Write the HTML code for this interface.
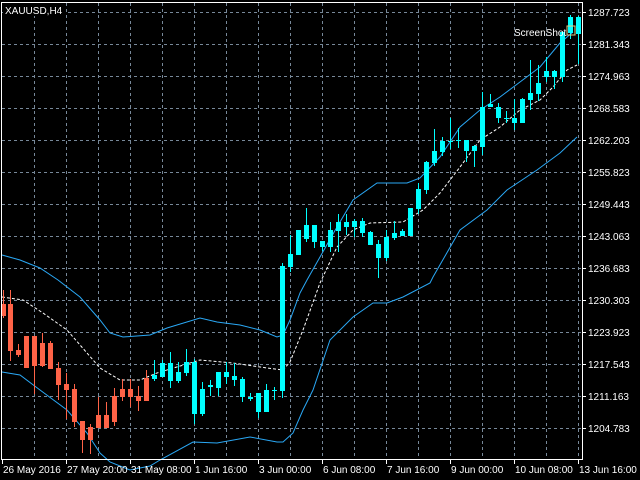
<!DOCTYPE html>
<html><head><meta charset="utf-8"><style>
html,body{margin:0;padding:0;background:#000;width:640px;height:480px;overflow:hidden}
svg{display:block}
text{font-family:"Liberation Sans",sans-serif;font-size:10px;fill:#fff}
</style></head><body>
<svg width="640" height="480" viewBox="0 0 640 480" xmlns="http://www.w3.org/2000/svg">
<rect width="640" height="480" fill="#000"/>
<g stroke="#778899" stroke-width="1" stroke-dasharray="3,3" fill="none">
<path d="M2 12.5H582M2 44.5H582M2 76.5H582M2 108.5H582M2 140.5H582M2 172.5H582M2 204.5H582M2 236.5H582M2 268.5H582M2 300.5H582M2 332.5H582M2 364.5H582M2 396.5H582M2 428.5H582"/>
<path d="M34.5 3V459M66.5 3V459M98.5 3V459M130.5 3V459M162.5 3V459M194.5 3V459M226.5 3V459M258.5 3V459M290.5 3V459M322.5 3V459M354.5 3V459M386.5 3V459M418.5 3V459M450.5 3V459M482.5 3V459M514.5 3V459M546.5 3V459M578.5 3V459"/>
</g>
<g fill="none" stroke="#2aa8f5" stroke-width="1">
<polyline points="2,255 20,260 40,268 58,280 80,297 100,320 110,333 123,337 150,335 167,328 200,318 217,322 240,325 260,330 277,337 283,335 290,320 300,293 307,280 320,257 337,227 353,200 377,183 407,183 420,178 440,157 460,127 480,110 500,97 520,82 540,67 560,43 573,32"/>
<polyline points="2,372 20,375 40,390 67,410 87,433 100,453 110,462 130,470 150,466 160,460 193,442 217,443 250,437 277,442 283,442 293,433 303,410 313,390 330,340 353,317 373,303 387,303 403,297 430,283 433,277 460,230 487,210 507,190 537,170 560,153 577,137"/>
</g>
<polyline fill="none" stroke="#fff" stroke-width="1" stroke-dasharray="3,2" points="2,297 23,300 43,313 67,330 87,353 100,368 120,380 140,380 157,373 200,360 233,363 267,368 283,370 290,362 303,330 320,283 337,247 353,230 370,223 403,222 423,210 440,193 460,167 480,140 500,127 520,110 540,100 553,87 567,70 577,65"/>
<path fill="none" stroke="#ff6347" stroke-width="1" d="M3.5 290V318M10.5 290V361M18.5 344V357M34.5 336V394M42.5 333V367M50.5 341V369M58.5 362V400M66.5 373V419M74.5 384V427M82.5 421V453M90.5 424V454M98.5 397V428M106.5 402V428M114.5 388V426M122.5 379V401M130.5 379V407M138.5 386V411M146.5 370V401"/>
<g fill="#ff6347">
<rect x="1" y="304" width="5" height="12"/><rect x="8" y="304" width="5" height="47"/><rect x="16" y="350" width="5" height="5"/><rect x="24" y="336" width="5" height="32"/><rect x="32" y="336" width="5" height="30"/><rect x="40" y="343" width="5" height="23"/><rect x="48" y="343" width="5" height="26"/><rect x="56" y="368" width="5" height="17"/><rect x="64" y="384" width="5" height="6"/><rect x="72" y="389" width="5" height="33"/><rect x="80" y="421" width="5" height="19"/><rect x="88" y="427" width="5" height="13"/><rect x="96" y="415" width="5" height="13"/><rect x="104" y="415" width="5" height="13"/><rect x="112" y="396" width="5" height="26"/><rect x="120" y="389" width="5" height="8"/><rect x="128" y="389" width="5" height="8"/><rect x="136" y="396" width="5" height="5"/><rect x="144" y="378" width="5" height="23"/>
</g>
<path fill="none" stroke="#00ffff" stroke-width="1" d="M154.5 360V381M162.5 360V377M170.5 352V388M178.5 362V383M186.5 349V376M194.5 359V424M202.5 382V416M210.5 380V396M218.5 372V396M226.5 362V384M234.5 363V386M242.5 377V402M250.5 393V401M258.5 393V418M266.5 384V412M274.5 387V400M282.5 263V398M290.5 235V272M298.5 230V255M306.5 208V242M314.5 225V248M322.5 241V251M330.5 222V252M338.5 214V252M346.5 214V235M354.5 219V237M362.5 218V237M370.5 231V245M378.5 240V278M386.5 230V261M394.5 221V240M402.5 229V236M410.5 208V236M418.5 183V214M426.5 161V194M434.5 129V166M442.5 137V156M450.5 118V149M458.5 128V148M466.5 140V162M474.5 145V167M482.5 92V155M490.5 94V107M498.5 103V123M506.5 111V123M514.5 99V130M522.5 98V123M530.5 60V110M538.5 65V101M546.5 57V82M554.5 70V89M562.5 31V82M570.5 15V39M578.5 16V64"/>
<g fill="#00ffff">
<rect x="152" y="375" width="5" height="4"/><rect x="160" y="363" width="5" height="14"/><rect x="168" y="363" width="5" height="18"/><rect x="176" y="372" width="5" height="9"/><rect x="184" y="362" width="5" height="11"/><rect x="192" y="362" width="5" height="52"/><rect x="200" y="389" width="5" height="25"/><rect x="208" y="385" width="5" height="2"/><rect x="216" y="372" width="5" height="16"/><rect x="224" y="372" width="5" height="5"/><rect x="232" y="376" width="5" height="4"/><rect x="240" y="379" width="5" height="18"/><rect x="248" y="397" width="5" height="2"/><rect x="256" y="393" width="5" height="19"/><rect x="264" y="390" width="5" height="22"/><rect x="272" y="390" width="5" height="1"/><rect x="280" y="266" width="5" height="125"/><rect x="288" y="254" width="5" height="13"/><rect x="296" y="230" width="5" height="25"/><rect x="304" y="225" width="5" height="14"/><rect x="312" y="225" width="5" height="17"/><rect x="320" y="241" width="5" height="6"/><rect x="328" y="230" width="5" height="17"/><rect x="336" y="222" width="5" height="9"/><rect x="344" y="222" width="5" height="5"/><rect x="352" y="221" width="5" height="6"/><rect x="360" y="221" width="5" height="12"/><rect x="368" y="232" width="5" height="13"/><rect x="376" y="244" width="5" height="14"/><rect x="384" y="237" width="5" height="21"/><rect x="392" y="233" width="5" height="5"/><rect x="400" y="231" width="5" height="5"/><rect x="408" y="208" width="5" height="28"/><rect x="416" y="189" width="5" height="20"/><rect x="424" y="162" width="5" height="28"/><rect x="432" y="151" width="5" height="12"/><rect x="440" y="141" width="5" height="11"/><rect x="448" y="141" width="5" height="1"/><rect x="456" y="140" width="5" height="1"/><rect x="464" y="140" width="5" height="11"/><rect x="472" y="146" width="5" height="5"/><rect x="480" y="107" width="5" height="40"/><rect x="488" y="104" width="5" height="3"/><rect x="496" y="107" width="5" height="11"/><rect x="504" y="118" width="5" height="1"/><rect x="512" y="118" width="5" height="5"/><rect x="520" y="99" width="5" height="24"/><rect x="528" y="93" width="5" height="7"/><rect x="536" y="83" width="5" height="11"/><rect x="544" y="71" width="5" height="6"/><rect x="552" y="71" width="5" height="6"/><rect x="560" y="32" width="5" height="45"/><rect x="568" y="17" width="5" height="16"/><rect x="576" y="17" width="5" height="17"/>
</g>
<path fill="none" stroke="#fff" stroke-width="1" d="M1.5 2V459.5H582.5V2.5H1.5"/>
<path fill="none" stroke="#fff" stroke-width="1" d="M583 12.5H586M583 44.5H586M583 76.5H586M583 108.5H586M583 140.5H586M583 172.5H586M583 204.5H586M583 236.5H586M583 268.5H586M583 300.5H586M583 332.5H586M583 364.5H586M583 396.5H586M583 428.5H586M2.5 460V464M66.5 460V464M130.5 460V464M194.5 460V464M258.5 460V464M322.5 460V464M386.5 460V464M450.5 460V464M514.5 460V464M578.5 460V464"/>
<rect x="3" y="3" width="62" height="13" fill="#000"/>
<text x="5" y="14">XAUUSD,H4</text>
<text x="514" y="36" font-size="10">ScreenShot</text>
<rect x="567" y="26" width="8" height="9" fill="none" stroke="#e8c880" stroke-width="1"/>
<g>
<text x="588" y="16">1287.723</text><text x="588" y="48">1281.343</text><text x="588" y="80">1274.963</text><text x="588" y="112">1268.583</text><text x="588" y="144">1262.203</text><text x="588" y="176">1255.823</text><text x="588" y="208">1249.443</text><text x="588" y="240">1243.063</text><text x="588" y="272">1236.683</text><text x="588" y="304">1230.303</text><text x="588" y="336">1223.923</text><text x="588" y="368">1217.543</text><text x="588" y="400">1211.163</text><text x="588" y="432">1204.783</text>
</g>
<g>
<text x="3" y="473">26 May 2016</text><text x="67" y="473">27 May 20:00</text><text x="131" y="473">31 May 08:00</text><text x="195" y="473">1 Jun 16:00</text><text x="259" y="473">3 Jun 00:00</text><text x="323" y="473">6 Jun 08:00</text><text x="387" y="473">7 Jun 16:00</text><text x="451" y="473">9 Jun 00:00</text><text x="515" y="473">10 Jun 08:00</text><text x="579" y="473">13 Jun 16:00</text>
</g>
</svg>
</body></html>
